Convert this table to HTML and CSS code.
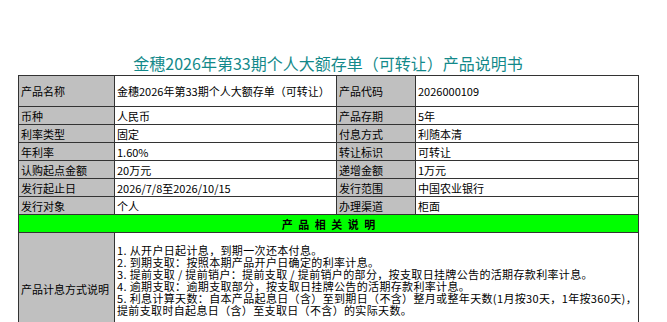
FILE: index.html
```html
<!DOCTYPE html>
<html lang="zh-CN">
<head>
<meta charset="utf-8">
<title>金穗2026年第33期个人大额存单（可转让）产品说明书</title>
<link rel="stylesheet" href="styles.css">
</head>
<body>
<div class="page">
  <h1 class="title">金穗2026年第33期个人大额存单（可转让）产品说明书</h1>
  <table class="sheet">
    <colgroup>
      <col class="c1"><col class="c2"><col class="c3"><col class="c4">
    </colgroup>
    <tr class="tall">
      <td class="lbl">产品名称</td><td>金穗2026年第33期个人大额存单（可转让）</td>
      <td class="lbl">产品代码</td><td>2026000109</td>
    </tr>
    <tr>
      <td class="lbl">币种</td><td>人民币</td>
      <td class="lbl">产品存期</td><td>5年</td>
    </tr>
    <tr>
      <td class="lbl">利率类型</td><td>固定</td>
      <td class="lbl">付息方式</td><td>利随本清</td>
    </tr>
    <tr>
      <td class="lbl">年利率</td><td>1.60%</td>
      <td class="lbl">转让标识</td><td>可转让</td>
    </tr>
    <tr>
      <td class="lbl">认购起点金额</td><td>20万元</td>
      <td class="lbl">递增金额</td><td>1万元</td>
    </tr>
    <tr>
      <td class="lbl">发行起止日</td><td>2026/7/8至2026/10/15</td>
      <td class="lbl">发行范围</td><td>中国农业银行</td>
    </tr>
    <tr>
      <td class="lbl">发行对象</td><td>个人</td>
      <td class="lbl">办理渠道</td><td>柜面</td>
    </tr>
    <tr>
      <td class="section" colspan="4">产 品 相 关 说 明</td>
    </tr>
    <tr class="desc">
      <td class="lbl">产品计息方式说明</td>
      <td class="text" colspan="3">
        <p>1. 从开户日起计息，到期一次还本付息。</p>
        <p>2. 到期支取：按照本期产品开户日确定的利率计息。</p>
        <p>3. 提前支取 / 提前销户：提前支取 / 提前销户的部分，按支取日挂牌公告的活期存款利率计息。</p>
        <p>4. 逾期支取：逾期支取部分，按支取日挂牌公告的活期存款利率计息。</p>
        <p>5. 利息计算天数：自本产品起息日（含）至到期日（不含）整月或整年天数(1月按30天，1年按360天)，</p>
        <p>提前支取时自起息日（含）至支取日（不含）的实际天数。</p>
      </td>
    </tr>
  </table>
</div>
</body>
</html>
```
FILE: styles.css
```css
html, body {
  margin: 0;
  padding: 0;
  background: #ffffff;
}

.page {
  width: 620px;
  padding: 53px 0 0 18px;
  font-family: "Noto Sans CJK SC", "Noto Sans", sans-serif;
  color: #000;
}

.title {
  margin: 0 0 2px 0;
  font-size: 16px;
  line-height: 20px;
  font-weight: normal;
  color: #13898a;
  text-align: center;
  white-space: nowrap;
}

.sheet {
  border-collapse: collapse;
  table-layout: fixed;
  width: 620px;
  font-size: 11px;
}

.c1 { width: 96px; }
.c2 { width: 222px; }
.c3 { width: 79px; }
.c4 { width: 223px; }

.sheet td {
  border: 1px solid #333;
  height: 17px;
  padding: 0 2px 0 2px;
  line-height: 16px;
  white-space: nowrap;
  overflow: hidden;
  vertical-align: middle;
}

.sheet tr.tall td {
  height: 30px;
}

.sheet td.lbl {
  background: #c0c0c0;
}

.sheet td.section {
  background: #00ff00;
  text-align: center;
  font-weight: bold;
  word-spacing: 3px;
}

.sheet tr.desc td {
  height: 101px;
}

.sheet td.text {
  vertical-align: top;
  padding-top: 11px;
  letter-spacing: 0.35px;
}

.text p {
  margin: 0;
  line-height: 12px;
}
```
